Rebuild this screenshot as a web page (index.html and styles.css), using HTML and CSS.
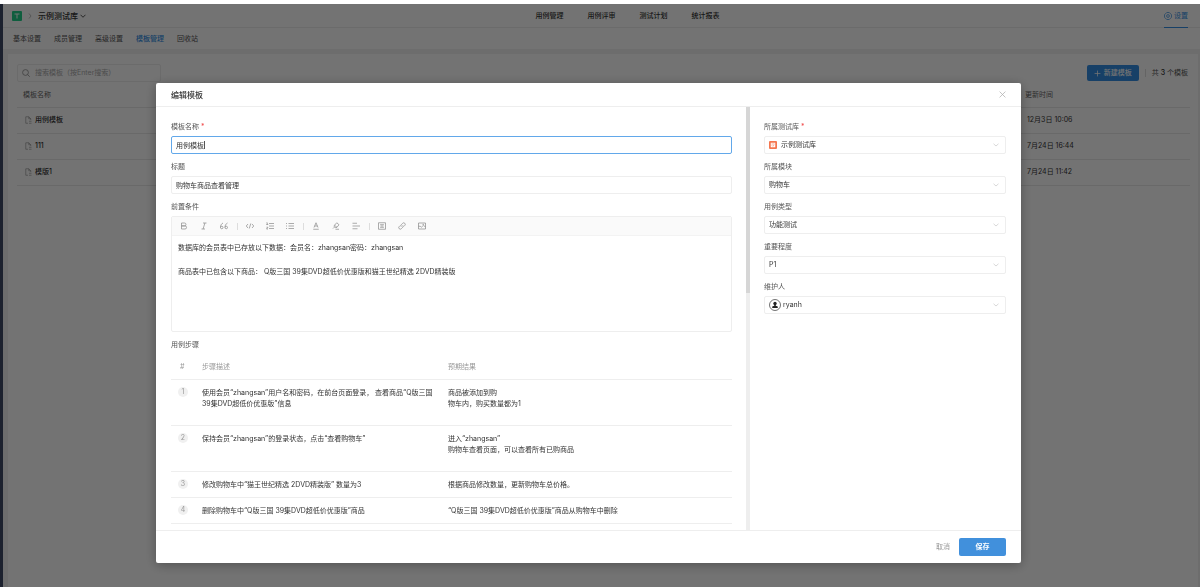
FILE: index.html
```html
<!DOCTYPE html>
<html lang="zh-CN">
<head>
<meta charset="utf-8">
<title>模板管理</title>
<link rel="stylesheet" href="styles.css">
</head>
<body>
<div class="app">
  <header class="topbar">
    <div class="crumbs">
      <svg class="logo" viewBox="0 0 20 20"><rect width="20" height="20" rx="2" fill="#22d18b"/><path d="M5 6h10M10 6v9" stroke="#fff" stroke-width="2" fill="none"/></svg>
      <svg class="crumb-sep" viewBox="0 0 8 12"><path d="M2 1l4 5-4 5" fill="none" stroke="#aaa" stroke-width="1.500"/></svg>
      <button class="library" type="button">示例测试库
        <svg viewBox="0 0 12 8"><path d="M1 1.500l5 5 5-5" fill="none" stroke="#444" stroke-width="1.800"/></svg>
      </button>
    </div>
    <nav class="mainnav">
      <a href="#">用例管理</a><a href="#">用例评审</a><a href="#">测试计划</a><a href="#">统计报表</a>
    </nav>
    <a class="settings" href="#">
      <svg viewBox="0 0 16 16" fill="none" stroke="#348fe4" stroke-width="1.400"><path d="M5.500 1h5l4.500 4.500v5L10.500 15h-5L1 10.500v-5z" stroke-linejoin="round"/><circle cx="8" cy="8" r="2.800"/></svg>设置
    </a>
  </header>
  <nav class="tabs">
    <a href="#">基本设置</a><a href="#">成员管理</a><a href="#">高级设置</a><a class="active" href="#">模板管理</a><a href="#">回收站</a>
  </nav>
  <main class="panel">
    <div class="tools">
      <label class="search">
        <svg viewBox="0 0 16 16" fill="none" stroke="#888" stroke-width="1.500"><circle cx="7" cy="7" r="5.800"/><path d="M11 11l4.500 4.500"/></svg>
        <input type="search" placeholder="搜索模板（按Enter搜索）" aria-label="搜索模板">
      </label>
      <div class="tools-right">
        <button class="create" type="button"><svg viewBox="0 0 12 12"><path d="M6 1v10M1 6h10" stroke="#fff" stroke-width="1.300"/></svg>新建模板</button>
        <span class="count">共 <b>3</b> 个模板</span>
      </div>
    </div>
    <table class="list">
      <thead><tr><th>模板名称</th><th class="time">更新时间</th></tr></thead>
      <tbody>
        <tr><td><svg viewBox="0 0 14 16" fill="none" stroke="#777"><path d="M6 14.500H1.500v-13h6l4 4V8M7.500 1.500v4h4M8 10.500h5M8 14.500h5"/></svg>用例模板</td><td class="time">12月3日 10:06</td></tr>
        <tr><td><svg viewBox="0 0 14 16" fill="none" stroke="#777"><path d="M6 14.500H1.500v-13h6l4 4V8M7.500 1.500v4h4M8 10.500h5M8 14.500h5"/></svg>111</td><td class="time">7月24日 16:44</td></tr>
        <tr><td><svg viewBox="0 0 14 16" fill="none" stroke="#777"><path d="M6 14.500H1.500v-13h6l4 4V8M7.500 1.500v4h4M8 10.500h5M8 14.500h5"/></svg>模版1</td><td class="time">7月24日 11:42</td></tr>
      </tbody>
    </table>
  </main>
</div>

<div class="backdrop">
  <section class="modal" role="dialog" aria-labelledby="modal-title">
    <header class="modal-head">
      <h1 id="modal-title">编辑模板</h1>
      <button class="close" type="button" aria-label="关闭"><svg viewBox="0 0 12 12"><path d="M1 1l10 10M11 1L1 11" stroke="#aaa" stroke-width="1.200"/></svg></button>
    </header>
    <div class="modal-body">
      <div class="main-col">
        <div class="field">
          <label for="name">模板名称<i>*</i></label>
          <div class="control"><input class="focused" id="name" type="text" value="用例模板"><span class="caret"></span></div>
        </div>
        <div class="field">
          <label for="subject">标题</label>
          <div class="control"><input id="subject" type="text" value="购物车商品查看管理"></div>
        </div>
        <div class="field">
          <label for="pre">前置条件</label>
          <div class="editor">
            <div class="toolbar">
              <button type="button" aria-label="加粗"><svg viewBox="0 0 16 16"><path d="M3 2h6a2.900 2.900 0 0 1 0 5.800H3zM3 7.800h7a3.100 3.100 0 0 1 0 6.200H3z"/></svg></button>
              <button type="button" aria-label="斜体"><svg viewBox="0 0 16 16"><path d="M6 2h7M3 14h7M9.800 2L6.200 14"/></svg></button>
              <button type="button" aria-label="引用"><svg viewBox="0 0 16 16"><path d="M6 2C2.500 4 1 6.500 1 11M15 2c-3.500 2-5 4.500-5 9"/><circle cx="3.500" cy="11" r="2.500"/><circle cx="12.500" cy="11" r="2.500"/></svg></button>
              <span class="sep"></span>
              <button type="button" aria-label="代码"><svg viewBox="0 0 16 16"><path d="M4 4L0.500 8 4 12M12 4l3.500 4L12 12M9.500 3l-3 10"/></svg></button>
              <button type="button" aria-label="有序列表"><svg viewBox="0 0 16 16"><path d="M6 3h10M6 8h10M6 13h10M1 1.500h1.500v3.500M0.500 5h4M1 10.500h3L1 14h3"/></svg></button>
              <button type="button" aria-label="无序列表"><svg viewBox="0 0 16 16"><path d="M5 3h11M5 8h11M5 13h11M0 3H2M0 8H2M0 13H2"/></svg></button>
              <span class="sep"></span>
              <button type="button" aria-label="文字颜色"><svg viewBox="0 0 16 16"><path d="M4 11l4-9.500L12 11M5.300 8h5.400M2.500 14.500h11"/></svg></button>
              <button type="button" aria-label="背景颜色"><svg viewBox="0 0 16 16"><path d="M5 6.500l4.500-5 4.500 4-4.500 5.500H6.500L4 9zM4.500 10.500L2 13M5 6.500l5 4M7 14.500h7"/></svg></button>
              <button type="button" aria-label="对齐"><svg viewBox="0 0 16 16"><path d="M1 2.500h9M1 8h15M1 13.500h10"/></svg></button>
              <span class="sep"></span>
              <button type="button" aria-label="表格"><svg viewBox="0 0 16 16"><path d="M1 1.500h14v13H1z"/><path d="M4 5h8M4 8h8M4 11h8M8 5v6" stroke-width="1"/></svg></button>
              <button type="button" aria-label="链接"><svg viewBox="0 0 16 16"><path d="M6.500 9.500a3 3 0 0 1 0-4l2.800-2.900a3 3 0 0 1 4.300 4.200l-2 2M9.500 6.500a3 3 0 0 1 0 4l-2.800 2.900a3 3 0 0 1-4.300-4.200l2-2"/></svg></button>
              <button type="button" aria-label="图片"><svg viewBox="0 0 16 16"><path d="M1 2h14v12H1zM1 8.500h3.500l2 2 4-3.500 4.500 2.500M9 4.800h3"/></svg></button>
            </div>
            <textarea id="pre">数据库的会员表中已存放以下数据：会员名：zhangsan密码：zhangsan

商品表中已包含以下商品： Q版三国 39集DVD超低价优惠版和猫王世纪精选 2DVD精装版</textarea>
          </div>
        </div>
        <h2>用例步骤</h2>
        <table class="steps">
          <thead><tr><th class="num">#</th><th class="desc">步骤描述</th><th>预期结果</th></tr></thead>
          <tbody>
            <tr class="tall"><td class="num"><span>1</span></td><td>使用会员“zhangsan”用户名和密码，在前台页面登录， 查看商品“Q版三国<br>39集DVD超低价优惠版”信息</td><td>商品被添加到购<br>物车内，购买数量都为1</td></tr>
            <tr class="tall"><td class="num"><span>2</span></td><td>保持会员“zhangsan”的登录状态，点击“查看购物车”</td><td>进入“zhangsan”<br>购物车查看页面，可以查看所有已购商品</td></tr>
            <tr><td class="num"><span>3</span></td><td>修改购物车中“猫王世纪精选 2DVD精装版” 数量为3</td><td>根据商品修改数量，更新购物车总价格。</td></tr>
            <tr><td class="num"><span>4</span></td><td>删除购物车中“Q版三国 39集DVD超低价优惠版”商品</td><td>“Q版三国 39集DVD超低价优惠版”商品从购物车中删除</td></tr>
          </tbody>
        </table>
      </div>
      <div class="track"><div class="thumb"></div></div>
      <div class="side-col">
        <div class="field">
          <label for="lib">所属测试库<i>*</i></label>
          <div class="control">
            <select class="with-icon" id="lib"><option>示例测试库</option></select>
            <svg class="lead" viewBox="0 0 16 16"><rect width="16" height="16" rx="2" fill="#f5764f"/><path d="M3.500 3.500h9v9h-9z" fill="#fff"/><path d="M5 6h6M5.500 8.500l2 2L10.500 8" fill="none" stroke="#f5764f" stroke-width="1.200"/></svg>
            <svg class="chev" viewBox="0 0 12 8"><path d="M1 1.500l5 4.500 5-4.500"/></svg>
          </div>
        </div>
        <div class="field">
          <label for="mod">所属模块</label>
          <div class="control"><select id="mod"><option>购物车</option></select><svg class="chev" viewBox="0 0 12 8"><path d="M1 1.500l5 4.500 5-4.500"/></svg></div>
        </div>
        <div class="field">
          <label for="type">用例类型</label>
          <div class="control"><select id="type"><option>功能测试</option></select><svg class="chev" viewBox="0 0 12 8"><path d="M1 1.500l5 4.500 5-4.500"/></svg></div>
        </div>
        <div class="field">
          <label for="prio">重要程度</label>
          <div class="control"><select id="prio"><option>P1</option></select><svg class="chev" viewBox="0 0 12 8"><path d="M1 1.500l5 4.500 5-4.500"/></svg></div>
        </div>
        <div class="field">
          <label for="owner">维护人</label>
          <div class="control">
            <select class="with-avatar" id="owner"><option>ryanh</option></select>
            <svg class="avatar" viewBox="0 0 24 24"><circle cx="12" cy="12" r="11" fill="#fff" stroke="#444" stroke-width="1.500"/><circle cx="12" cy="9" r="3.400" fill="#222"/><path d="M10.500 11h3v2.500l4 1.500v3h-11v-3l4-1.500z" fill="#222"/></svg>
            <svg class="chev" viewBox="0 0 12 8"><path d="M1 1.500l5 4.500 5-4.500"/></svg>
          </div>
        </div>
      </div>
    </div>
    <footer class="modal-foot">
      <button class="cancel" type="button">取消</button>
      <button class="save" type="button">保存</button>
    </footer>
  </section>
</div>
</body>
</html>
```

FILE: styles.css
```css
* { box-sizing: border-box; }

body {
  margin: 0;
  padding-top: 4px;
  height: 100vh;
  background: #fff;
  color: #333;
  font: 7px/12px Inter, "Noto Sans CJK SC", sans-serif;
  overflow: hidden;
}

button, input, select, textarea {
  margin: 0;
  padding: 0;
  border: 0;
  background: none;
  color: inherit;
  font: inherit;
}

a { color: inherit; text-decoration: none; }
svg { display: block; flex: none; }

.app {
  display: flex;
  flex-direction: column;
  height: 100%;
  border-left: 3px solid #3f4a66;
  background: #f1f1f1;
}

/* Top bar */
.topbar {
  display: grid;
  grid-template-columns: 533fr auto 469fr;
  height: 24px;
  flex: none;
  padding-right: 12px;
  background: #fff;
  border-bottom: 1px solid #eee;
}
.crumbs { display: flex; align-items: center; padding-left: 9px; gap: 6px; }
.logo { width: 10px; height: 10px; }
.crumb-sep { width: 4px; height: 6px; }
.library { display: flex; align-items: center; gap: 2px; font-size: 8px; font-weight: 500; }
.library svg { width: 6px; height: 4px; }
.mainnav { display: flex; align-items: center; gap: 24px; font-weight: 500; }
.settings {
  display: flex;
  align-items: center;
  justify-self: end;
  gap: 2px;
  height: 24px;
  color: #348fe4;
  border-bottom: 1px solid #348fe4;
}
.settings svg { width: 8px; height: 8px; }

.tabs {
  display: flex;
  align-items: center;
  gap: 13px;
  height: 21px;
  flex: none;
  padding-left: 10px;
  background: #fff;
  color: #555;
}
.tabs .active { color: #348fe4; font-weight: 500; }

/* Template list */
.panel {
  flex: 1;
  margin: 5px 2px 0 5px;
  padding: 10px 8px 0 9px;
  background: #fff;
}
.tools { display: flex; justify-content: space-between; align-items: center; }
.search {
  display: flex;
  align-items: center;
  gap: 5px;
  width: 144px;
  height: 18px;
  padding-left: 4px;
  border: 1px solid #eee;
  border-radius: 2px;
}
.search svg { width: 8px; height: 8px; }
.search input { flex: 1; min-width: 0; outline: 0; }
.search input::placeholder { color: #aaa; }
.tools-right { display: flex; align-items: center; gap: 6px; }
.create {
  display: flex;
  align-items: center;
  justify-content: center;
  gap: 3px;
  width: 52px;
  height: 16px;
  border-radius: 2px;
  background: #348fe4;
  color: #fff;
  font-weight: 500;
}
.create svg { width: 7px; height: 7px; }
.count { padding: 0 2px 0 6px; border-left: 1px solid #ddd; line-height: 8px; color: #555; }
.count b { font-weight: 500; color: #333; }

.list { width: 100%; border-collapse: collapse; }
.list th, .list td { padding: 0 0 0 6px; border-bottom: 1px solid #e8e8e8; text-align: left; }
.list th { height: 25px; padding-top: 2px; color: #666; font-weight: 400; }
.list td { height: 26px; padding-left: 8px; font-weight: 500; }
.list .time { width: 165px; padding-left: 2px; }
.list td.time { font-weight: 400; }
.list th.time { padding-left: 0; }
.list svg { display: inline-block; width: 7px; height: 8px; margin-right: 3px; vertical-align: middle; }

/* Dialog */
.backdrop {
  position: fixed;
  inset: 4px 0 0 0;
  display: flex;
  padding: 79px 179px 24px 156px;
  background: rgba(0, 0, 0, 0.55);
}
.modal {
  display: flex;
  flex-direction: column;
  flex: 1;
  min-width: 0;
  border-radius: 2px;
  background: #fff;
  box-shadow: 0 2px 12px rgba(0, 0, 0, 0.3);
}
.modal-head {
  display: flex;
  align-items: center;
  justify-content: space-between;
  height: 24px;
  flex: none;
  padding: 0 15px;
  border-bottom: 1px solid #eee;
}
.modal-head h1 { margin: 0; font-size: 8px; font-weight: 500; }
.close svg { width: 7px; height: 7px; }
.modal-body { display: flex; flex: 1; min-height: 0; }
.main-col { flex: 1; min-width: 0; padding: 14px 14px 0 15px; overflow: hidden; }
.track { width: 4px; background: #eee; }
.thumb { height: 44%; background: #d6d6d6; }
.side-col { width: 271px; padding: 14px 15px 0 14px; }

.field { display: flex; flex-direction: column; gap: 3px; margin-bottom: 7px; }
.field label, .main-col h2 { margin: 0; color: #555; font-size: 7px; font-weight: 400; }
.field i { margin-left: 2px; color: #f04c4c; font-style: normal; }
.control { position: relative; display: flex; }
.control input, .control select {
  width: 100%;
  height: 18px;
  padding: 0 4px;
  border: 1px solid #eee;
  border-radius: 2px;
  outline: 0;
  appearance: none;
}
.control .focused { border-color: #62a8ea; }
.control .with-icon { padding-left: 16px; }
.control .with-avatar { padding-left: 18px; }
.caret { position: absolute; left: 33px; top: 5px; width: 1px; height: 8px; background: #555; }
.lead { position: absolute; left: 5px; top: 5px; width: 8px; height: 8px; }
.avatar { position: absolute; left: 5px; top: 3px; width: 12px; height: 12px; }
.chev { position: absolute; right: 7px; top: 7px; width: 6px; height: 4px; fill: none; stroke: #ccc; stroke-width: 1.5; }

/* Rich text editor */
.editor { display: flex; flex-direction: column; height: 116px; border: 1px solid #eee; border-radius: 2px; }
.toolbar {
  display: flex;
  align-items: center;
  height: 19px;
  flex: none;
  padding-left: 2px;
  border-bottom: 1px solid #f3f3f3;
  background: #fafafa;
}
.toolbar button { display: flex; justify-content: center; width: 20px; }
.toolbar svg { width: 8px; height: 8px; overflow: visible; fill: none; stroke: #888; stroke-width: 1.4; }
.sep { width: 1px; height: 7px; margin: 0 2px 0 3px; background: #ddd; }
.editor textarea { flex: 1; padding: 6px; outline: 0; resize: none; }

/* Steps */
.steps { width: 100%; margin-top: 3px; border-collapse: collapse; table-layout: fixed; line-height: 11px; }
.steps th, .steps td { padding: 7px 0; border-bottom: 1px solid #eee; text-align: left; vertical-align: top; }
.steps th { height: 25px; color: #999; font-weight: 400; }
.steps td { height: 26px; }
.steps .tall td { height: 46px; }
.steps .num { width: 31px; padding-left: 7px; color: #999; }
.steps th.num { padding-left: 9px; }
.steps .desc { width: 246px; }
.steps .num span {
  display: block;
  width: 10px;
  height: 10px;
  border-radius: 50%;
  background: #f0f0f0;
  line-height: 10px;
  text-align: center;
}

.modal-foot {
  display: flex;
  align-items: center;
  justify-content: flex-end;
  gap: 9px;
  height: 33px;
  flex: none;
  padding-right: 15px;
  border-top: 1px solid #eee;
}
.cancel { color: #999; }
.save { width: 47px; height: 18px; border-radius: 2px; background: #4190dc; color: #fff; font-weight: 700; }
```
